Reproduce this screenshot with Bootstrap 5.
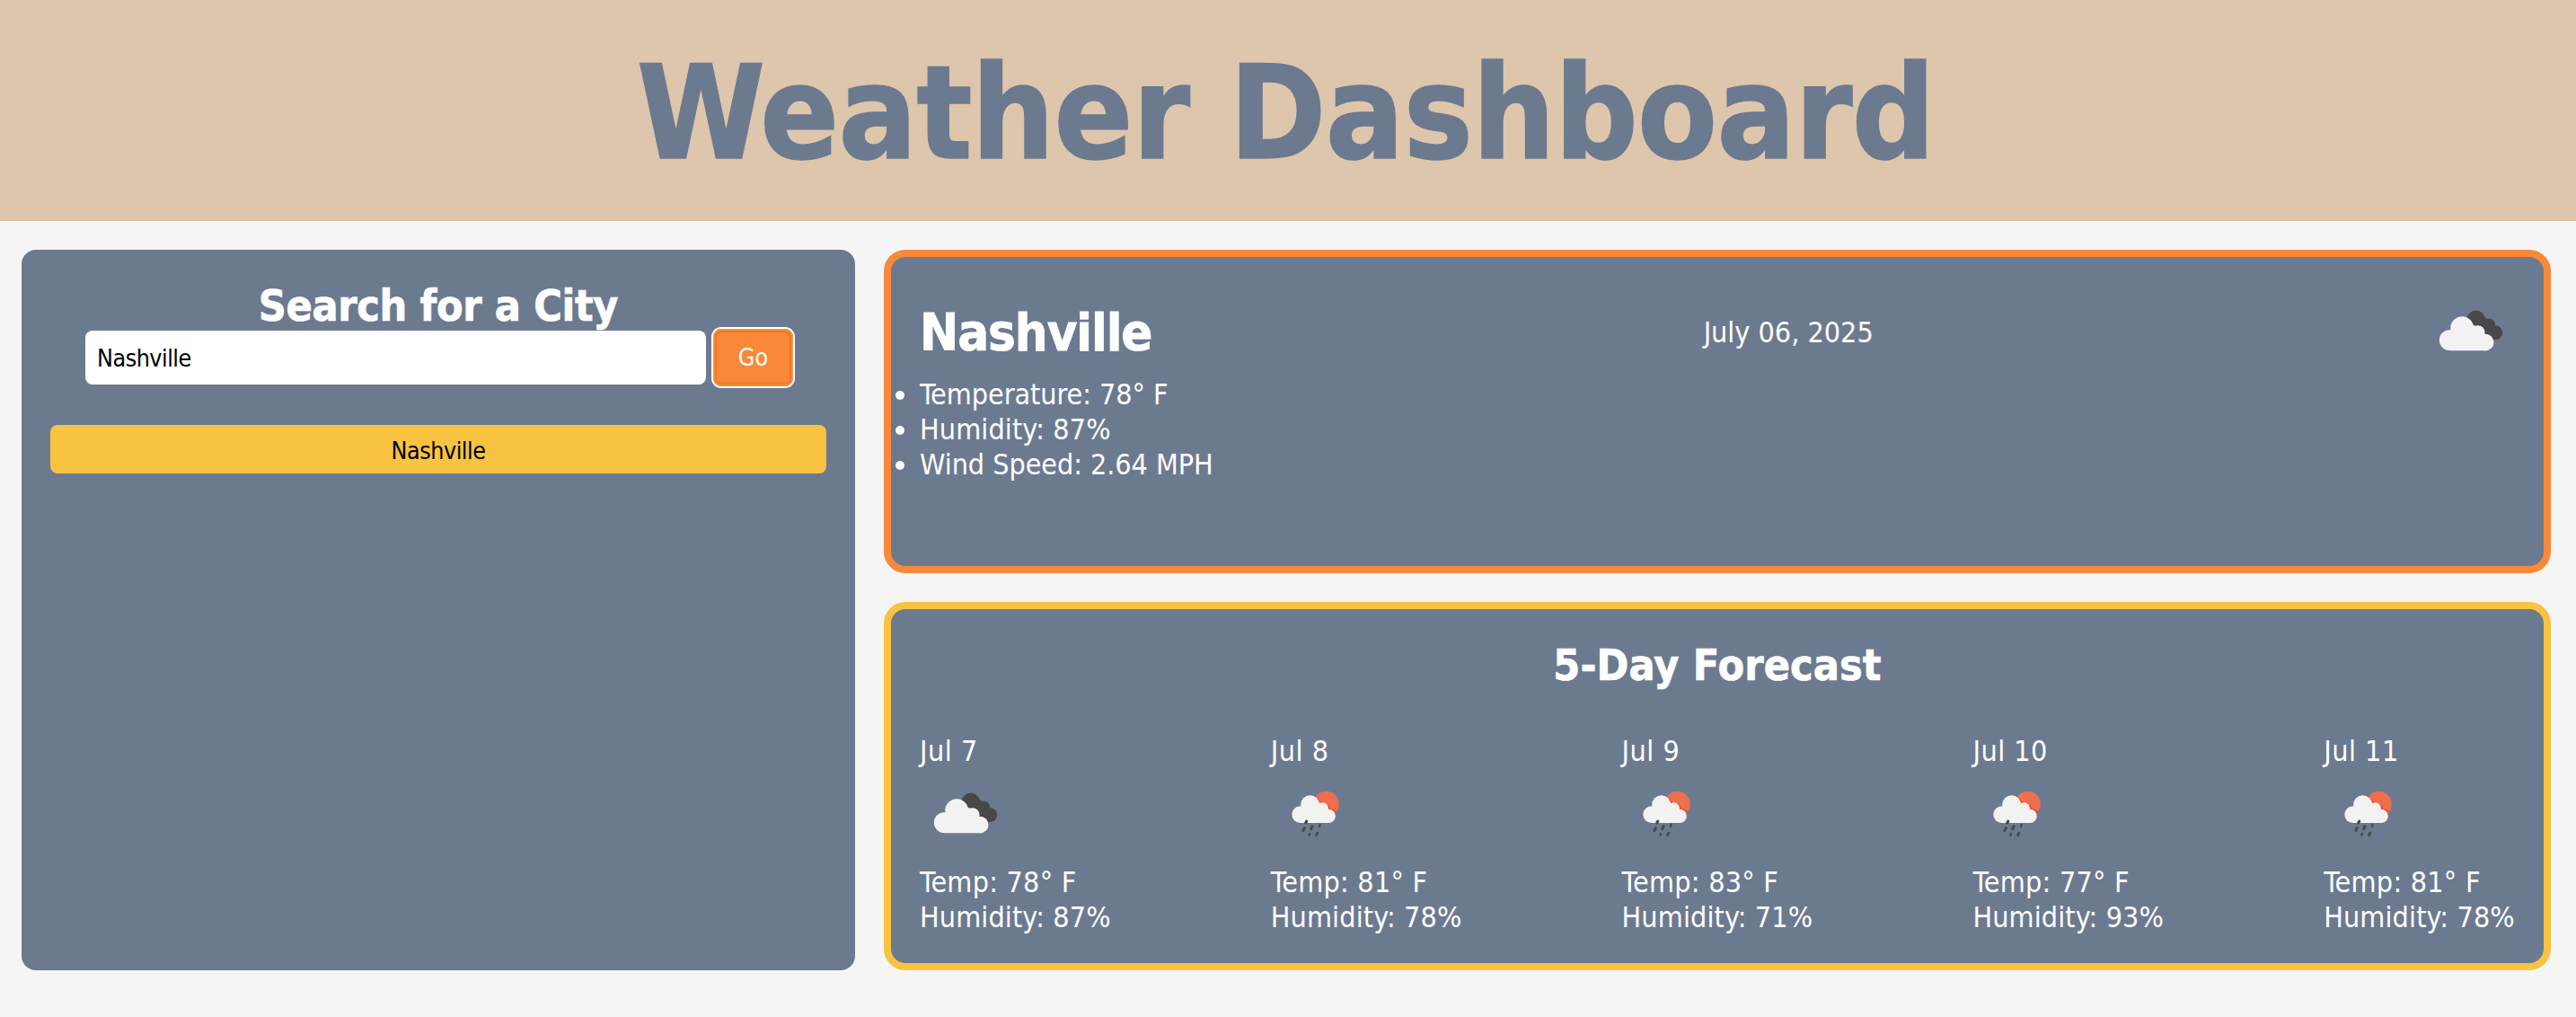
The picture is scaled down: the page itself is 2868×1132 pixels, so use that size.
<!DOCTYPE html>
<html lang="en">
<head>
<meta charset="utf-8">
<meta name="viewport" content="width=device-width, initial-scale=1">
<title>Weather Dashboard</title>
<link rel="stylesheet" href="https://cdn.jsdelivr.net/npm/bootstrap@5.3.0/dist/css/bootstrap.min.css">
<style>
:root { --slate: #6c7a90; --sand: #ddc6ab; --orange: #f98939; --gold: #f8c341; }
body { font-family: "DejaVu Sans Condensed", "DejaVu Sans", Tahoma, sans-serif; font-size: 32px; line-height: 39px; background: #f5f5f5; color: #fff; }
.site-header { height: 246px; background: var(--sand); color: var(--slate); padding: 6px 5px 0 0; }
.site-title { font-size: 144px; font-weight: 700; line-height: 174px; letter-spacing: -.55px; -webkit-text-stroke: 1.6px var(--slate); }
.dash { padding: 32px 28px 52px 24px; gap: 32px; }
.search-panel { width: 928px; height: 802px; padding: 32px; border-radius: 16px; background: var(--slate); }
.section-title { height: 58px; font-size: 48px; font-weight: 700; line-height: 53px; padding-top: 4px; letter-spacing: .12px; -webkit-text-stroke: .7px #fff; }
.search-panel .section-title { letter-spacing: -.36px; }
.search-form { padding: 0 39px; gap: 8px; }
.city-input { width: 691px; height: 60px; border: 0; border-radius: 8px; padding: 0 13px; font-size: 26.67px; letter-spacing: -.5px; color: #000; }
.city-input:focus { box-shadow: none; }
.go-btn { width: 89px; height: 64px; margin-top: -2px; padding: 0; border: 0; border-radius: 9px; background: var(--orange); color: #fff; font-size: 26.67px; line-height: 64px; box-shadow: 0 0 0 2px #fff, inset 0 0 0 1.5px #f39a57, inset 0 0 0 4px #f17a22; }
.go-btn:hover { background: var(--orange); color: #fff; }
.city-btn { height: 54px; margin-top: 43px; padding: 3px 0 0; border: 0; border-radius: 8px; background: var(--gold); color: #000; font-size: 26.67px; line-height: 51px; letter-spacing: -.46px; }
.results { gap: 32px; }
.panel { border: 8px solid; border-radius: 24px; background: var(--slate); padding: 32px; }
.panel-now { height: 360px; border-color: var(--orange); }
.panel-days { height: 410px; border-color: var(--gold); }
.now-row { height: 100px; }
.now-city { font-size: 57.6px; font-weight: 700; line-height: 70px; padding-top: 5px; letter-spacing: -1.1px; -webkit-text-stroke: .8px #fff; }
.now-date { padding-top: 4px; }
.facts { padding: 2px 0 0; letter-spacing: -.05px; }
.days { margin-top: 48px; }
.day-col { width: 212.8px; white-space: nowrap; }
.day-col .day-name { margin-top: 1px; line-height: 38px; letter-spacing: .5px; }
.wx-icon { width: 100px; height: 100px; display: block; }
.day-facts { padding-top: 8px; letter-spacing: .25px; }
.facts .day-hum, .day-hum { letter-spacing: .12px; }
</style>
<script src="https://cdn.jsdelivr.net/npm/bootstrap@5.3.0/dist/js/bootstrap.bundle.min.js"></script>
</head>
<body>
<svg class="d-none" aria-hidden="true">
  <symbol id="wx-clouds" viewBox="0 0 100 100">
    <g fill="#48484a"><circle cx="56.7" cy="38" r="10.4"/><circle cx="71.2" cy="43.2" r="6.8"/><circle cx="78.2" cy="52.2" r="8"/><path d="M50 42L60 30L76 42L82 59L76 60L60 52Z"/></g>
    <g fill="#f2f2f2"><circle cx="27.2" cy="60.6" r="11.4"/><circle cx="41.2" cy="47.2" r="12.9"/><circle cx="58.8" cy="52" r="7.8"/><circle cx="67.3" cy="63" r="9.2"/><path d="M27 50L42 40L60 46L68 56L68 72.2H27Z"/></g>
  </symbol>
  <symbol id="wx-rain" viewBox="1 0 100 100">
    <circle cx="62.6" cy="40" r="14.2" fill="#ee6e4d"/>
    <path d="M52.2 34Q56 37 56.5 40.5Q65 38.5 66.5 46Q72 46 73 49.5" fill="none" stroke="#ee4b2b" stroke-width="2"/>
    <g fill="#f2f2f2"><circle cx="33.7" cy="51.6" r="9.4"/><circle cx="44.6" cy="40.6" r="10.4"/><circle cx="58.4" cy="44.8" r="6.6"/><circle cx="65.2" cy="53.4" r="7.6"/><path d="M34 43L45 36L59 40L66 48V61H34Z"/></g>
    <g stroke="#48484a" stroke-linecap="round"><path d="M40.7 59.2L39.8 60.8" stroke-width="3.2"/><path d="M38.4 66.4L36.8 69.6" stroke-width="2.8"/><path d="M46.9 65L45.8 67.6" stroke-width="3.2"/><path d="M55.6 62.6L55.1 65" stroke-width="2.3"/><path d="M44 73L43.4 74.4" stroke-width="2.5"/><path d="M52.8 72.2L51.6 74.4" stroke-width="3"/></g>
  </symbol>
</svg>

<header class="site-header d-flex align-items-center justify-content-center">
  <h1 class="site-title m-0">Weather Dashboard</h1>
</header>

<main class="dash d-flex align-items-start">
  <aside class="search-panel flex-shrink-0">
    <h2 class="section-title text-center mb-0">Search for a City</h2>
    <form class="search-form d-flex align-items-start" onsubmit="return false">
      <input class="city-input form-control flex-shrink-0" type="text" value="Nashville" aria-label="City">
      <button class="go-btn btn flex-shrink-0" type="submit">Go</button>
    </form>
    <button class="city-btn btn d-block w-100" type="button">Nashville</button>
  </aside>

  <div class="results d-flex flex-column flex-grow-1">
    <section class="panel panel-now">
      <div class="now-row d-flex align-items-center justify-content-between">
        <h2 class="now-city m-0">Nashville</h2>
        <p class="now-date mb-0">July 06, 2025</p>
        <svg class="wx-icon" role="img" aria-label="Clouds"><use href="#wx-clouds"/></svg>
      </div>
      <ul class="facts mb-0">
        <li>Temperature: 78° F</li>
        <li class="day-hum">Humidity: 87%</li>
        <li>Wind Speed: 2.64 MPH</li>
      </ul>
    </section>

    <section class="panel panel-days">
      <h2 class="section-title text-center mb-0">5-Day Forecast</h2>
      <div class="days d-flex justify-content-between">
        <div class="day-col"><p class="day-name mb-0">Jul 7</p><svg class="wx-icon" role="img" aria-label="Clouds"><use href="#wx-clouds"/></svg><div class="day-facts"><div>Temp: 78° F</div><div class="day-hum">Humidity: 87%</div></div></div>
        <div class="day-col"><p class="day-name mb-0">Jul 8</p><svg class="wx-icon" role="img" aria-label="Rain"><use href="#wx-rain"/></svg><div class="day-facts"><div>Temp: 81° F</div><div class="day-hum">Humidity: 78%</div></div></div>
        <div class="day-col"><p class="day-name mb-0">Jul 9</p><svg class="wx-icon" role="img" aria-label="Rain"><use href="#wx-rain"/></svg><div class="day-facts"><div>Temp: 83° F</div><div class="day-hum">Humidity: 71%</div></div></div>
        <div class="day-col"><p class="day-name mb-0">Jul 10</p><svg class="wx-icon" role="img" aria-label="Rain"><use href="#wx-rain"/></svg><div class="day-facts"><div>Temp: 77° F</div><div class="day-hum">Humidity: 93%</div></div></div>
        <div class="day-col"><p class="day-name mb-0">Jul 11</p><svg class="wx-icon" role="img" aria-label="Rain"><use href="#wx-rain"/></svg><div class="day-facts"><div>Temp: 81° F</div><div class="day-hum">Humidity: 78%</div></div></div>
      </div>
    </section>
  </div>
</main>
</body>
</html>
